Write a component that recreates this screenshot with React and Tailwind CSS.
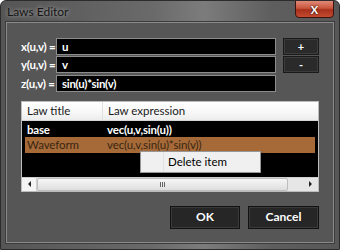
import React from 'react';

const labels = [
  { name: 'x(u,v) =', value: 'u' },
  { name: 'y(u,v) =', value: 'v' },
  { name: 'z(u,v) =', value: 'sin(u)*sin(v)' },
];

export default function App() {
  return (
    <div
      className="relative w-[340px] h-[250px] overflow-hidden rounded-t-[6px] border border-[#2c2c2c] bg-[linear-gradient(to_right,#555_0%,#6a6a6a_45%,#7c7c7c_60%,#5e5e5e_80%,#575757_100%)] flex flex-col"
      style={{ fontFamily: 'Lato, "Open Sans", sans-serif' }}
    >
      {/* Title bar */}
      <div className="h-[21px] shrink-0 flex items-center pl-[6px]">
        <span className="text-[12px] text-[#161616] [text-shadow:0_0_4px_rgba(255,255,255,0.6)]">Laws Editor</span>
      </div>
      <div className="absolute top-[-1px] right-[5px] w-[39px] h-[18px] rounded-b-[4px] border border-[#3a1510] bg-[linear-gradient(to_bottom,#e08a78_0%,#c8553c_45%,#a8301c_55%,#c44a30_100%)] flex items-center justify-center">
        <span className="text-white text-[11px] font-bold leading-none [text-shadow:0_0_2px_#000]">X</span>
      </div>

      {/* Panel */}
      <div className="mx-[5px] mb-[6px] flex-1 border border-[#8a8a8a] outline outline-1 outline-[#3c3c3c] bg-[#565656] px-[14px] pt-[15px] flex flex-col">
        <div className="flex gap-[7px]">
          <div className="flex flex-col gap-[1px] flex-1">
            {labels.map(l => (
              <div key={l.name} className="flex items-center">
                <span className="w-[33px] text-right pr-[2px] text-[11.5px] font-bold text-white tracking-[-0.2px] whitespace-nowrap">{l.name}</span>
                <div className="ml-[2px] flex-1 h-[17px] bg-black border border-[#8c8c8c] flex items-center px-[5px]">
                  <span className="text-[11.5px] font-bold text-white tracking-[-0.3px]">{l.value}</span>
                </div>
              </div>
            ))}
          </div>
          <div className="flex flex-col gap-[1px] w-[36px]">
            <button className="h-[17px] bg-[#2a2a2a] border border-[#1a1a1a] shadow-[inset_0_0_0_1px_#3c3c3c] text-white text-[11px] font-bold leading-none">+</button>
            <button className="h-[17px] bg-[#2a2a2a] border border-[#1a1a1a] shadow-[inset_0_0_0_1px_#3c3c3c] text-white text-[11px] font-bold leading-none">-</button>
          </div>
        </div>

        {/* Table */}
        <div className="relative mt-[9px] border border-[#bcbcbc] flex flex-col">
          <div className="h-[19px] flex items-center bg-[linear-gradient(to_bottom,#ffffff_0%,#f7f7f7_60%,#ececec_100%)] border-b border-[#d5d5d5] text-[11.5px] text-[#1a1a1a]">
            <div className="w-[81px] pl-[5px] border-r border-[#e0e0e0] h-full flex items-center">Law title</div>
            <div className="pl-[5px]">Law expression</div>
          </div>
          <div className="h-[56px] bg-black px-[3px] pt-[1px]">
            <div className="h-[15px] flex items-center text-[11.5px] font-bold text-white tracking-[-0.2px]">
              <div className="w-[78px] pl-[2px]">base</div>
              <div className="pl-[4px]">vec(u,v,sin(u))</div>
            </div>
            <div className="h-[16px] flex items-center bg-[#a56a38] text-[11.5px] text-[#3a2612] tracking-[-0.1px]">
              <div className="w-[78px] pl-[2px]">Waveform</div>
              <div className="pl-[4px]">vec(u,v,sin(u)*sin(v))</div>
            </div>
          </div>
          {/* Scrollbar */}
          <div className="h-[14px] flex bg-[#e6e6e6] border-t border-[#cfcfcf]">
            <div className="w-[15px] flex items-center justify-center bg-[#f4f4f4] border-r border-[#cfcfcf]">
              <div className="w-0 h-0 border-y-[3px] border-y-transparent border-r-[3px] border-r-[#222]" />
            </div>
            <div className="w-[251px] flex items-center justify-center gap-[1px] bg-[linear-gradient(to_bottom,#f6f6f6,#dedede)] border border-[#bdbdbd] rounded-[2px]">
              <div className="w-[1px] h-[5px] bg-[#666]" />
              <div className="w-[1px] h-[5px] bg-[#666]" />
              <div className="w-[1px] h-[5px] bg-[#666]" />
            </div>
            <div className="flex-1" />
            <div className="w-[15px] flex items-center justify-center">
              <div className="w-0 h-0 border-y-[3px] border-y-transparent border-l-[3px] border-l-[#222]" />
            </div>
          </div>

          {/* Context menu */}
          <div className="absolute left-[118px] top-[49px] w-[121px] h-[22px] bg-[#f0f0f0] border border-[#979797] shadow-[2px_2px_2px_rgba(0,0,0,0.4)] flex items-center">
            <div className="w-[23px] h-full border-r border-[#e2e2e2]" />
            <span className="pl-[4px] text-[11.5px] text-black">Delete item</span>
          </div>
        </div>

        {/* Buttons */}
        <div className="mt-[14px] flex justify-end gap-[8px]">
          <button className="w-[70px] h-[23px] bg-[#262626] border border-[#111] shadow-[inset_0_0_0_1px_#3a3a3a] text-white text-[12px] font-bold">OK</button>
          <button className="w-[71px] h-[23px] bg-[#262626] border border-[#111] shadow-[inset_0_0_0_1px_#3a3a3a] text-white text-[12px] font-bold">Cancel</button>
        </div>
      </div>
    </div>
  );
}
